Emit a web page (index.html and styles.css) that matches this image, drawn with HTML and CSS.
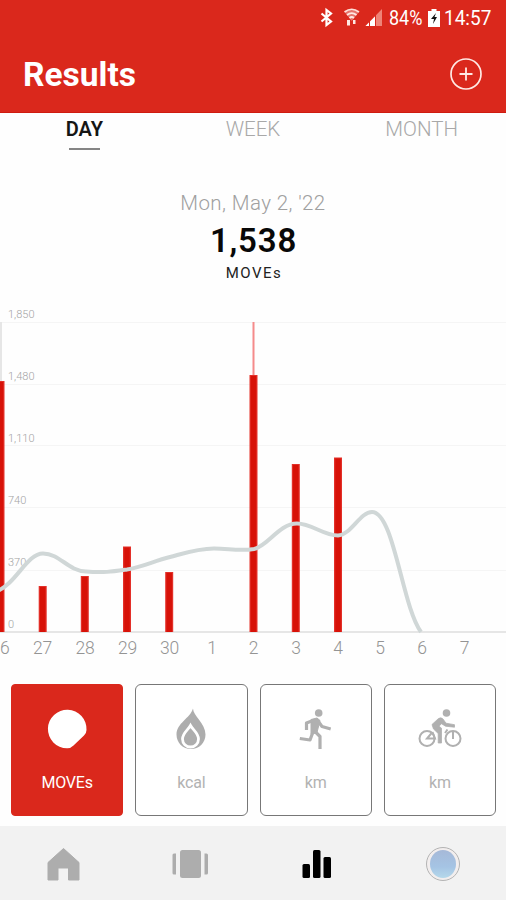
FILE: index.html
```html
<!DOCTYPE html>
<html lang="en">
<head>
<meta charset="utf-8">
<title>Results</title>
<link rel="stylesheet" href="styles.css">
</head>
<body>
<main class="app">
  <header class="header">
    <div class="status">
      <svg class="status-icons" viewBox="0 0 68 36">
        <path d="M1.500 13.500l9.500 8-4.500 3.500V10l4.500 3.500-9.500 8" fill="none" stroke="#fff" stroke-width="2.200"/>
        <g fill="none" stroke="#ffdcd4" stroke-width="1.700">
          <path d="M24.500 12q7.200-5.500 14.500 0M27 15q4.700-3.800 9.500 0M29.500 18q2.200-2 4.500 0"/>
        </g>
        <path d="M24.500 12q7.200-5 14.500 0L31.700 21z" fill="#fff" opacity=".35"/>
        <path d="M27 20h3v5.500h-3zM33 20h2.500v4H33z" fill="#ffe8e2"/>
        <path d="M45.500 26L62 9v17z" fill="#ee8377"/>
        <path d="M45.500 26l9.500-9.500V26z" fill="#fff"/>
        <path d="M49.500 21v6M55.500 15v12" stroke="#da281c"/>
      </svg>
      <span class="battery-text">84%</span>
      <svg class="battery" viewBox="0 0 12 18">
        <path d="M3.500 0h5v2H12v16H0V2h3.500z" fill="#fff"/>
        <path d="M8 4L3 10h3l-1 5 4-7H6.500z" fill="#111"/>
      </svg>
      <span class="clock">14:57</span>
    </div>
    <div class="titlebar">
      <h1>Results</h1>
      <svg class="add" viewBox="0 0 34 34">
        <circle cx="17" cy="17" r="15" fill="none" stroke="#ffe9e4" stroke-width="1.700"/>
        <path d="M10.500 17h13M17 10.500v13" stroke="#ffe9e4" stroke-width="1.800"/>
      </svg>
    </div>
  </header>
  <nav class="tabs">
    <span class="tab active">DAY</span>
    <span class="tab">WEEK</span>
    <span class="tab">MONTH</span>
  </nav>
  <section class="summary">
    <p class="date">Mon, May 2, '22</p>
    <p class="total">1,538</p>
    <p class="unit">MOVEs</p>
  </section>
  <svg class="chart" viewBox="0 300 506 370">
    <path class="grid" d="M0 322.500H506M0 384.500H506M0 445.500H506M0 507.500H506M0 570.500H506"/>
    <path class="axis" d="M0 632H506"/>
    <path d="M1 322V381" stroke="#e6e6e6" stroke-width="2"/>
    <path d="M253.500 322V376" stroke="#f58b8b" stroke-width="2"/>
    <g class="ylabels">
      <text x="8" y="318">1,850</text><text x="8" y="380">1,480</text><text x="8" y="442">1,110</text>
      <text x="8" y="504">740</text><text x="8" y="566">370</text><text x="8" y="628">0</text>
    </g>
    <g class="bars">
      <path d="M.500 381V632M42.700 586V632M84.800 576V632M127 546.500V632M169.200 572V632M253.500 375V632M295.800 464V632M338 457.500V632"/>
      <path class="core" d="M.500 382V632M42.700 587V632M84.800 577V632M127 547.500V632M169.200 573V632M253.500 376V632M295.800 465V632M338 458.500V632"/>
    </g>
    <path class="trend" d="M-3 591C16 584 27 553.500 43 553.500C60 553.500 68 571 86 571.500C104 573 113 571.500 127 569.500C142 567 154 561 170 557C185 553 198 548.500 214 548.500C229 548.500 239 551.500 254 549C268 546 279 523.500 297 523.500C312 523.500 323 535.500 338 535.500C351 535 360 512 372 512C394 512 402 606 421 632"/>
    <g class="xlabels">
      <text x="0" y="654">26</text><text x="42.500" y="654">27</text><text x="85" y="654">28</text>
      <text x="127.500" y="654">29</text><text x="169.500" y="654">30</text><text x="212" y="654">1</text>
      <text x="253.500" y="654">2</text><text x="296" y="654">3</text><text x="338" y="654">4</text>
      <text x="380" y="654">5</text><text x="422" y="654">6</text><text x="464.500" y="654">7</text>
    </g>
  </svg>
  <section class="cards">
    <div class="card selected">
      <svg viewBox="0 0 48 48"><path d="M43.500 25A19.300 19.300 0 1 0 24 43.300Q27.500 43.500 30.500 40.500L41 30.500Q43.500 28 43.500 25z" fill="#fff"/></svg>
      <span>MOVEs</span>
    </div>
    <div class="card">
      <svg viewBox="0 0 48 48">
        <path d="M26 3.500C26 11 38.500 18 38.500 29.500C38.500 38 32 44 24 44S9.500 38 9.500 29.500C9.500 18 23 13.500 26 3.500z" fill="#adadad"/>
        <path d="M23.500 20.500C26 25 31.500 28 31.500 34A8 8 0 0 1 15.500 34C15.500 28 21 25 23.500 20.500z" fill="#adadad" stroke="#fff" stroke-width="2.800"/>
      </svg>
      <span>kcal</span>
    </div>
    <div class="card">
      <svg viewBox="0 0 48 48">
        <circle cx="26.700" cy="8" r="3.800" fill="#b0b0b0"/>
        <path d="M19 14.500L25 13l3 2.500-1 4-2 8-6 2z" fill="#b0b0b0" stroke="#b0b0b0" stroke-linejoin="round"/>
        <path d="M21 15.500L14.500 18V25M26 16L30 21.500l8.700 2.500M21 27L18 35 7.800 33.500M22.500 26L28 31.500v12.500" fill="none" stroke="#b0b0b0" stroke-width="3.200" stroke-linejoin="round"/>
      </svg>
      <span>km</span>
    </div>
    <div class="card">
      <svg viewBox="0 0 48 48">
        <circle cx="30.500" cy="8" r="3.800" fill="#b0b0b0"/>
        <path d="M16 19.500L22.500 13.500Q25 12 27 14l3 4.200 8.500 1.500v2.500l-9-1-4-2.500-2.500 2.500 2.500 2V38h-3.300V28.500L17.500 24z" fill="#b0b0b0" stroke="#b0b0b0" stroke-width=".8" stroke-linejoin="round"/>
        <g fill="none" stroke="#b0b0b0" stroke-width="2">
          <circle cx="11" cy="33.500" r="7.500"/><circle cx="37" cy="33.500" r="7.500"/>
          <path d="M16.500 27L11 33.500h8L16.500 27M29 28l2.500-3.500M37 34v-7"/>
        </g>
      </svg>
      <span>km</span>
    </div>
  </section>
  <nav class="bottom">
    <div><svg viewBox="0 0 40 40"><path d="M20.500 4.500L36 18.500V36H25.500V24H15V36H5V18.500z" fill="#adadad" stroke="#adadad" stroke-linejoin="round"/></svg></div>
    <div><svg viewBox="0 0 40 40" fill="#adadad"><rect x="10" y="6" width="21" height="28" rx="2.500"/><path d="M2.500 11Q2.500 9.500 4 9.500H6V30.500H4Q2.500 30.500 2.500 29zM34.500 9.500h2Q38 9.500 38 11V29Q38 30.500 36.500 30.500H34.500z"/></svg></div>
    <div><svg viewBox="0 0 40 40"><rect x="6.500" y="20" width="7.500" height="14" rx="1.500"/><rect x="17" y="6" width="7.500" height="28" rx="1.500"/><rect x="27.500" y="13" width="7.500" height="21" rx="1.500"/></svg></div>
    <div><span class="avatar"><span></span></span></div>
  </nav>
</main>
</body>
</html>
```

FILE: styles.css
```css
* { box-sizing: border-box; }
body { margin: 0; font-family: Roboto, sans-serif; background: #fff; }
h1, p { margin: 0; }
svg { display: block; }
.app { width: 506px; height: 900px; overflow: hidden; display: flex; flex-direction: column; background: #fefefe; }
.header { height: 113px; background: #da281c; border-bottom: 1px solid #cf1b10; color: #fff; }
.status { height: 36px; display: flex; align-items: center; padding-left: 320px; font-size: 20px; }
.status-icons { width: 68px; height: 36px; }
.battery-text, .clock { transform-origin: left center; white-space: nowrap; }
.battery-text { width: 40px; margin-left: 1px; transform: scaleX(.9); }
.battery { width: 12px; height: 18px; margin-left: -1px; }
.clock { margin-left: 4px; transform: scaleX(.95); }
.titlebar { display: flex; justify-content: space-between; align-items: center; height: 76px; padding: 0 23px; }
h1 { font-size: 33.500px; line-height: 76px; font-weight: 700; padding-top: 2px; }
.add { width: 34px; height: 34px; }
.tabs { height: 37px; display: grid; grid-template-columns: repeat(3, 1fr); justify-items: center; }
.tab { font-size: 20.500px; line-height: 33px; height: 37px; color: #a8a8a8; font-weight: 300; }
.tab.active { color: #151515; font-weight: 600; font-size: 20px; }
.tab.active::after { content: ""; display: block; width: 31px; height: 2px; margin: 2px auto 0; background: #858585; }
.summary { height: 150px; padding-top: 41px; text-align: center; }
.date { font-size: 20.500px; line-height: 25px; color: #a0a0a0; letter-spacing: .4px; font-weight: 300; }
.total { font-size: 33px; line-height: 40px; margin-top: 5px; font-weight: 600; letter-spacing: .8px; color: #080808; padding-left: 1px; }
.unit { font-size: 15px; line-height: 20px; margin-top: 2px; letter-spacing: 1.500px; color: #222; padding-left: 2px; }
.chart { width: 506px; height: 370px; flex: none; }
.grid { stroke: #f5f5f5; fill: none; }
.axis { stroke: #dedede; stroke-width: 1.500; }
.ylabels { font-size: 11px; fill: #a4a4a4; font-weight: 300; }
.xlabels { font-size: 17.500px; fill: #949494; font-weight: 300; text-anchor: middle; letter-spacing: -.2px; }
.bars { stroke: #e33029; stroke-width: 8; }
.bars .core { stroke: #d71208; stroke-width: 5.500; }
.trend { fill: none; stroke: #d0d7d7; stroke-width: 4; }
.cards { height: 156px; padding: 13.500px 10px 0 11px; display: grid; grid-template-columns: repeat(4, 1fr); column-gap: 12px; }
.card { height: 132px; border: 1.500px solid #777; border-radius: 6px; display: flex; flex-direction: column; align-items: center; padding-top: 20.500px; color: #b2b2b2; font-size: 16px; background: #fff; }
.card svg { width: 48px; height: 48px; }
.card span { margin-top: 20px; line-height: 20px; letter-spacing: -.2px; }
.card.selected { background: #da281c; border-color: #da281c; color: #fff; border-radius: 4px; }
.bottom { height: 74px; flex: none; background: #f2f2f2; display: grid; grid-template-columns: repeat(4, 1fr); align-items: center; justify-items: center; padding-top: 1px; }
.bottom svg { width: 40px; height: 40px; }
.avatar { display: block; width: 34px; height: 34px; border-radius: 50%; border: 1px solid #b4b4b4; background: #f2eeee; padding: 2px; }
.avatar span { display: block; height: 28px; margin: 0 1px; border-radius: 50%; background: linear-gradient(#a6b9d8, #a5c4e4 60%, #b5d8ea); }
```
